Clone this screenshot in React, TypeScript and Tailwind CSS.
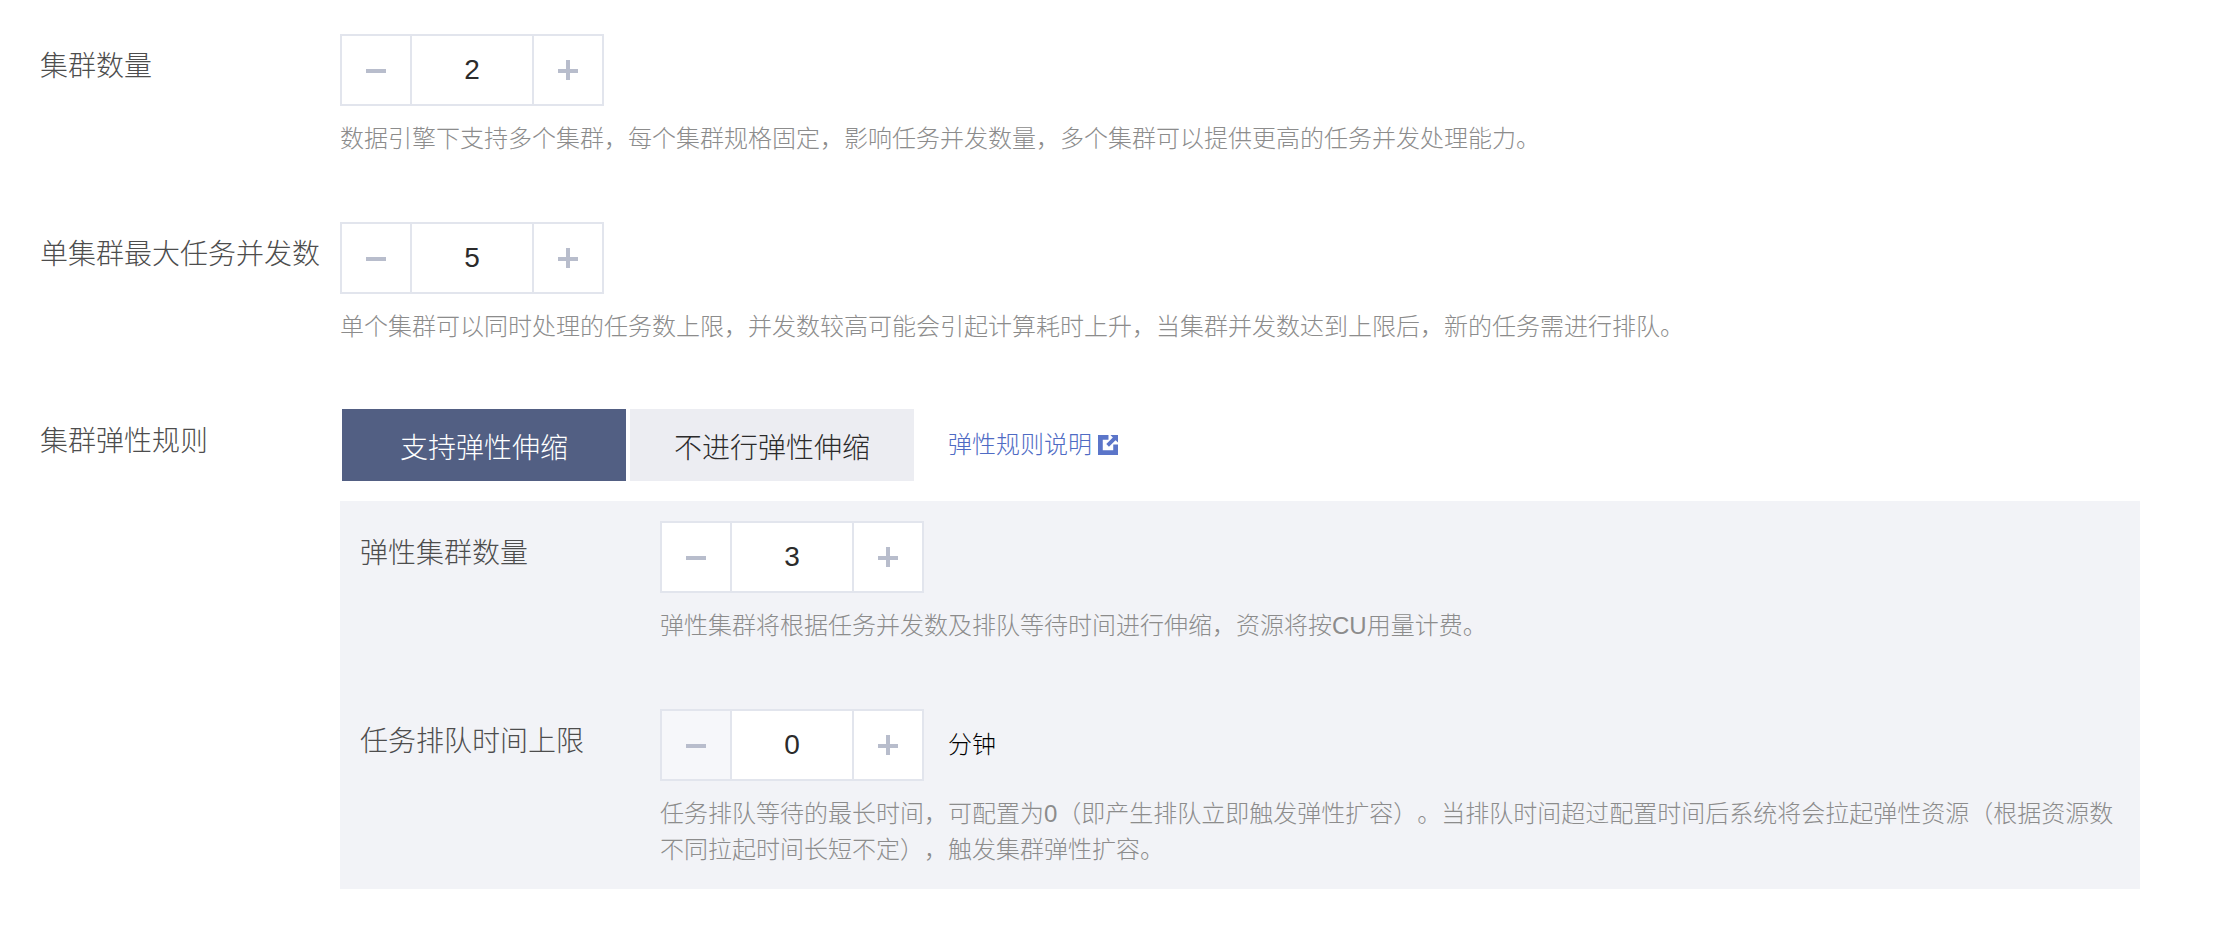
import React from 'react';

const cjk = '"Liberation Sans", "Noto Sans CJK SC", sans-serif';

function Stepper({ value, minusDisabled }: { value: number; minusDisabled?: boolean }) {
    return (
        <div className="flex h-[72px] w-[264px] bg-white">
            <div className={`flex h-full w-[72px] items-center justify-center border-2 border-[#e2e5ed] ${minusDisabled ? 'bg-[#f6f7fa]' : 'bg-white'}`}>
                <div className="mt-[2px] h-[4px] w-[20px] bg-[#b8bdcc]"></div>
            </div>
            <div className="flex h-full w-[120px] items-center justify-center border-y-2 border-[#e2e5ed] text-[28px] text-[#2b2b2b]">
                {value}
            </div>
            <div className="relative flex h-full w-[72px] items-center justify-center border-2 border-[#e2e5ed] bg-white">
                <div className="mt-[2px] h-[4px] w-[20px] bg-[#b8bdcc]"></div>
                <div className="absolute left-[32px] top-[24px] h-[20px] w-[4px] bg-[#b8bdcc]"></div>
            </div>
        </div>
    );
}

function Hint({ children }: { children: React.ReactNode }) {
    return <div className="mt-[15px] text-[24px] font-light leading-[36px] text-[#8c8c8c] [text-spacing-trim:space-all]">{children}</div>;
}

function Label({ text, width }: { text: string; width: string }) {
    return <div className={`${width} shrink-0 text-[28px] font-light leading-[66px] text-[#4d4d4d]`}>{text}</div>;
}

function ExternalIcon() {
    return (
        <svg width="20" height="20" viewBox="0 0 21 21">
            <path d="M0 0h11v5H5v11h11v-6h5v11H0z" fill="#5b75c9" />
            <path d="M13 0h8v8l-2.6-2.6L11.5 12.3 8.7 9.5l6.9-6.9z" fill="#5b75c9" />
        </svg>
    );
}

export default function App() {
    return (
        <div className="h-[930px] w-[2232px] overflow-hidden bg-white pl-[40px] pt-[34px]" style={{ fontFamily: cjk }}>
            {/* 集群数量 */}
            <div className="flex h-[188px]">
                <Label text="集群数量" width="w-[300px]" />
                <div>
                    <Stepper value={2} />
                    <Hint>数据引擎下支持多个集群，每个集群规格固定，影响任务并发数量，多个集群可以提供更高的任务并发处理能力。</Hint>
                </div>
            </div>

            {/* 单集群最大任务并发数 */}
            <div className="flex h-[187px]">
                <Label text="单集群最大任务并发数" width="w-[300px] whitespace-nowrap" />
                <div>
                    <Stepper value={5} />
                    <Hint>单个集群可以同时处理的任务数上限，并发数较高可能会引起计算耗时上升，当集群并发数达到上限后，新的任务需进行排队。</Hint>
                </div>
            </div>

            {/* 集群弹性规则 */}
            <div className="flex">
                <Label text="集群弹性规则" width="w-[300px]" />
                <div className="w-[1800px]">
                    <div className="ml-[2px] flex items-center">
                        <div className="flex h-[72px] w-[284px] items-center justify-center bg-[#525f83] pt-[8px] text-[28px] font-light text-white">支持弹性伸缩</div>
                        <div className="ml-[4px] flex h-[72px] w-[284px] items-center justify-center bg-[#ecedf2] pt-[8px] text-[28px] font-light text-[#2b2b2b]">不进行弹性伸缩</div>
                        <div className="ml-[34px] flex items-center gap-[6px] text-[24px] font-light text-[#4f6bc4]">
                            弹性规则说明
                            <ExternalIcon />
                        </div>
                    </div>

                    <div className="mt-[20px] bg-[#f2f3f7] px-[20px] pb-[21px] pt-[20px]">
                        <div className="flex h-[188px]">
                            <Label text="弹性集群数量" width="w-[300px]" />
                            <div>
                                <Stepper value={3} />
                                <Hint>弹性集群将根据任务并发数及排队等待时间进行伸缩，资源将按CU用量计费。</Hint>
                            </div>
                        </div>
                        <div className="flex">
                            <Label text="任务排队时间上限" width="w-[300px]" />
                            <div>
                                <div className="flex items-center">
                                    <Stepper value={0} minusDisabled />
                                    <span className="ml-[24px] text-[24px] font-light text-black">分钟</span>
                                </div>
                                <Hint>任务排队等待的最长时间，可配置为0（即产生排队立即触发弹性扩容）。当排队时间超过配置时间后系统将会拉起弹性资源（根据资源数不同拉起时间长短不定），触发集群弹性扩容。</Hint>
                            </div>
                        </div>
                    </div>
                </div>
            </div>
        </div>
    );
}
